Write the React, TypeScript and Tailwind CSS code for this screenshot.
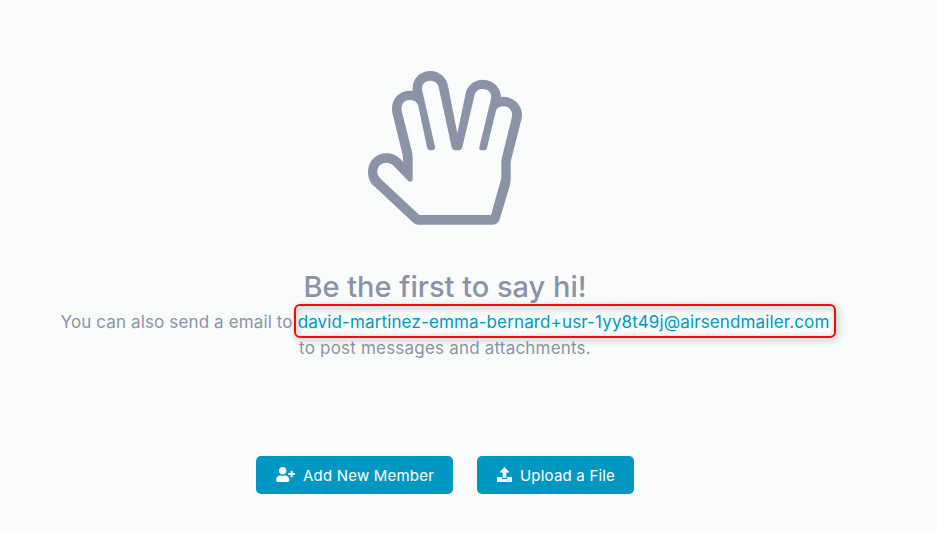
import { FaUserPlus } from "react-icons/fa";

function HandIcon() {
  return (
    <svg viewBox="39 33 462 462" className="h-[154px] w-[154px]" fill="currentColor" fillRule="evenodd">
      <path d="M39 335C39 303 64 280 95 280C113 280 126 287 137 298L145 306L143 285L112 158C106 120 130 92 165 92L173 92C170 60 192 33 226 33C252 33 275 52 279 78L307 220L332 100C337 76 358 59 384 59C416 59 438 85 438 111C475 107 501 134 501 165L500 175L467 305V358L465 375L435 475C431 489 424 494 412 494H190Q181 494 175 488L57 378C44 367 39 352 39 335ZM67 335Q67 347 75 355L193 465H408L439 355V300L471 170C474 153 463 139 445 139C434 139 426 144 423 152L396 263Q394 271 386 271H380Q371 271 373 262L408 116C412 101 401 87 383 87C372 87 362 93 359 104L322 262Q320 271 311 271H301Q292 271 290 262L251 82C249 71 240 62 226 62C210 62 198 73 202 92L240 260Q242 270 233 271H227Q218 271 216 262L190 138C187 127 178 120 165 120C148 120 137 133 140 152L171 275L173 292V357Q173 360 171 362Q166 368 160 363L114 316C109 311 102 308 93 308C79 308 67 319 67 335Z" />
    </svg>
  );
}

function UploadIcon() {
  return (
    <svg viewBox="0 0 15 15" className="mb-[2px] h-[15px] w-[15px]" fill="currentColor">
      <path d="M7.5 0L12 4.7V5.4H9.3V10.4Q9.3 11 8.7 11H6.3Q5.7 11 5.7 10.4V5.4H3V4.7Z" />
      <path d="M0.7 10H4.7V10.7Q4.7 12 6 12H9Q10.3 12 10.3 10.7V10H14.3Q15 10 15 10.7V14.3Q15 15 14.3 15H0.7Q0 15 0 14.3V10.7Q0 10 0.7 10Z" />
      <path d="M10 13H11.2V14H10ZM12.2 13H13.4V14H12.2Z" className="text-[#0098c3]" fillOpacity="0.4" />
    </svg>
  );
}

export default function App() {
  return (
    <main className="h-[533px] w-[937px] overflow-hidden bg-[#fafcfc] font-['Inter',sans-serif] text-[#8b93a7]">
      <div className="flex w-[890px] flex-col items-center pt-[71px]">
        <HandIcon />
        <h1 className="mt-[43px] text-[29px] leading-[38px] font-medium">Be the first to say hi!</h1>
        <p className="mt-[3px] text-center text-[17px] leading-[26px] tracking-[0.13px] whitespace-nowrap">
          You can also send a email to{" "}
          <span className="relative text-[#0098c3]">
            david-martinez-emma-bernard+usr-1yy8t49j@airsendmailer.com
            <span className="absolute -top-[8px] -right-[7px] -bottom-[6px] -left-[4px] rounded-[6px] border-2 border-[#f90808] drop-shadow-[2px_2px_3px_rgba(0,0,0,0.4)]" />
          </span>
          <br />
          <span className="tracking-[0.2px]">to post messages and attachments.</span>
        </p>
        <div className="mt-[95px] flex gap-6">
          <button className="flex h-[38px] w-[197px] items-center gap-2 rounded-[5px] bg-[#0098c3] pl-5 text-[15px] tracking-[0.2px] text-white">
            <FaUserPlus className="mb-[2px] h-[15px] w-[19px]" />
            <span className="pt-[2px]">Add New Member</span>
          </button>
          <button className="flex h-[38px] w-[157px] items-center gap-2 rounded-[5px] bg-[#0098c3] pl-5 text-[15px] tracking-[0.2px] text-white">
            <UploadIcon />
            <span className="pt-[2px]">Upload a File</span>
          </button>
        </div>
      </div>
    </main>
  );
}
